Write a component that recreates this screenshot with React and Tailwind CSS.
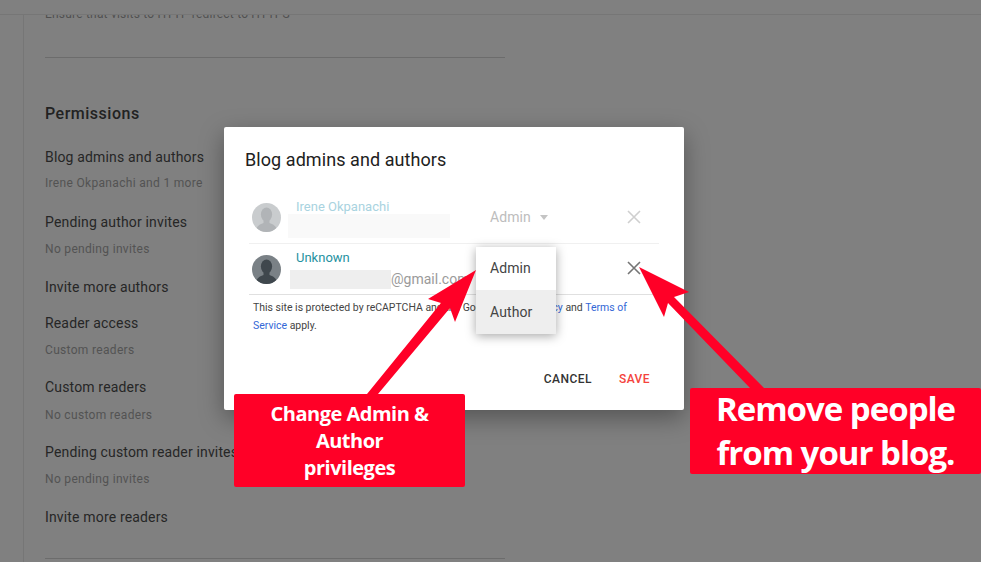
const settings = [
  { title: 'Blog admins and authors', sub: 'Irene Okpanachi and 1 more', titleGap: 'mt-[23px]', subGap: 'mt-[8px]' },
  { title: 'Pending author invites', sub: 'No pending invites', titleGap: 'mt-[21px]', subGap: 'mt-[9px]' },
  { title: 'Invite more authors', titleGap: 'mt-[20px]' },
  { title: 'Reader access', sub: 'Custom readers', titleGap: 'mt-[16px]', subGap: 'mt-[9px]' },
  { title: 'Custom readers', sub: 'No custom readers', titleGap: 'mt-[19px]', subGap: 'mt-[10px]' },
  { title: 'Pending custom reader invites', sub: 'No pending invites', titleGap: 'mt-[19px]', subGap: 'mt-[9px]' },
  { title: 'Invite more readers', titleGap: 'mt-[20px]' },
]

const Avatar = ({ faded }) => (
  <svg width="29" height="29" viewBox="0 0 29 29" className={faded ? 'shrink-0 opacity-40' : 'shrink-0'}>
    <defs>
      <clipPath id={faded ? 'avatar-a' : 'avatar-b'}>
        <circle cx="14.5" cy="14.5" r="14.5" />
      </clipPath>
    </defs>
    <g clipPath={faded ? 'url(#avatar-a)' : 'url(#avatar-b)'}>
      <rect width="29" height="29" fill="#7a8186" />
      <ellipse cx="14.5" cy="11.5" rx="5.6" ry="7" fill="#3f474d" />
      <path d="M11.5 17h6v3c3 1.4 7 2 8 9H3.5c1-7 5-7.6 8-9z" fill="#3f474d" />
    </g>
  </svg>
)

const CloseIcon = ({ color }) => (
  <svg width="14" height="14" viewBox="0 0 14 14">
    <path d="M1 1l12 12M13 1L1 13" stroke={color} strokeWidth="1.6" fill="none" />
  </svg>
)

export default function App() {
  return (
    <div className="relative h-[562px] w-[981px] overflow-hidden bg-[#808080] font-['Roboto',sans-serif]">
      <div className="relative z-10 h-[15px] border-b border-[#767676] bg-[#808080]" />

      {/* dimmed settings page */}
      <div className="ml-[23px] h-[556px] border-l border-[#767676] pl-[21px]">
        <div className="w-[460px]">
          <div className="-mt-[9px] text-[12px] leading-[16px] tracking-[0.2px] text-[#505050]">
            Ensure that visits to HTTP redirect to HTTPS
          </div>
          <div className="mt-[35px] border-t border-[#6c6c6c]" />
          <h2 className="mt-[46px] text-[16px] leading-[20px] font-medium tracking-[0.5px] text-[#222]">Permissions</h2>
          {settings.map((s) => (
            <div key={s.title + s.titleGap}>
              <div className={`${s.titleGap} text-[14px] leading-[20px] tracking-[0.16px] whitespace-nowrap text-[#262626]`}>{s.title}</div>
              {s.sub && <div className={`${s.subGap} text-[12px] leading-[16px] tracking-[0.32px] text-[#535353]`}>{s.sub}</div>}
            </div>
          ))}
          <div className="mt-[31px] border-t border-[#6c6c6c]" />
        </div>
      </div>

      {/* modal */}
      <div className="absolute top-[127px] left-[224px] z-20 h-[283px] w-[460px] rounded-[2px] bg-white px-[25px] shadow-[0_8px_24px_rgba(0,0,0,0.35)]">
        <h1 className="-ml-[4px] pt-[22px] text-[18px] leading-[22px] tracking-[0.07px] text-[#212121]">Blog admins and authors</h1>

        <div className="mt-[20px] flex h-[53px] items-center border-b border-[#f0f0f0] pr-[18px] pl-[3px]">
          <Avatar faded />
          <div className="ml-[7px] w-[202px] shrink-0">
            <div className="mt-[3px] pl-[8px] text-[13px] leading-[16px] text-[#a9d3e0]">Irene Okpanachi</div>
            <div className="mt-[-1px] h-[24px] w-[162px] bg-[#f9f9f9]" />
          </div>
          <span className="text-[14px] tracking-[0.1px] text-[#bdbdbd]">Admin</span>
          <span className="mt-[1px] ml-[9px] h-0 w-0 border-x-[4.5px] border-t-[5px] border-x-transparent border-t-[#c4c4c4]" />
          <span className="ml-auto"><CloseIcon color="#cfcfcf" /></span>
        </div>

        <div className="flex h-[51px] items-center border-b border-[#e0e0e0] pr-[18px] pl-[3px]">
          <Avatar />
          <div className="ml-[9px] flex-1">
            <div className="mt-[1px] pl-[6px] text-[13px] leading-[16px] text-[#26919f]">Unknown</div>
            <div className="mt-[4px] flex items-center">
              <div className="h-[19px] w-[101px] bg-[#eeeeee]" />
              <span className="text-[14px] leading-[19px] text-[#9a9a9a]">@gmail.com</span>
            </div>
          </div>
          <span className="-mt-[3px]"><CloseIcon color="#757575" /></span>
        </div>

        <p className="mt-[4px] ml-[4px] text-[10.47px] leading-[18px] text-[#444]">
          This site is protected by reCAPTCHA and the Google <span className="text-[#3367d6]">Privacy Policy</span> and <span className="text-[#3367d6]">Terms of Service</span> apply.
        </p>

        <div className="mt-[36px] flex justify-end gap-[27px] pr-[9px] text-[12px] leading-[16px] font-medium tracking-[0.45px]">
          <span className="text-[#333]">CANCEL</span>
          <span className="text-[#f4433c]">SAVE</span>
        </div>

        {/* role menu */}
        <div className="absolute top-[120px] left-[252px] w-[80px] bg-white text-[14px] tracking-[0.1px] text-[#444] shadow-[0_2px_10px_rgba(0,0,0,0.35)]">
          <div className="flex h-[43px] items-center pl-[14px]">Admin</div>
          <div className="flex h-[44px] items-center bg-[#eeeeee] pl-[14px]">Author</div>
        </div>
      </div>

      {/* annotation arrows */}
      <svg className="absolute top-0 left-0 z-30" width="981" height="562" viewBox="0 0 981 562">
        <polygon fill="#ff0027" points="367,394 441,303 428,299 476,270 455,322 450,308 378,394" />
        <polygon fill="#ff0027" points="639,267 689,292 674,297 764,388 750,388 668,303 664,317" />
      </svg>

      {/* annotation callouts */}
      <div className="absolute top-[394px] left-[234px] z-40 flex h-[93px] w-[231px] items-center justify-center rounded-[2px] bg-[#ff0027] text-center font-['Open_Sans',sans-serif] text-[20px] leading-[27px] font-bold tracking-[-0.5px] text-white">
        <div>Change Admin &amp;<br />Author<br />privileges</div>
      </div>
      <div className="absolute top-[388px] left-[690px] z-40 flex h-[86px] w-[291px] items-center justify-center rounded-[2px] bg-[#ff0027] text-center font-['Open_Sans',sans-serif] text-[33px] leading-[44px] font-bold tracking-[-1px] text-white">
        <div>Remove people<br />from your blog.</div>
      </div>
    </div>
  )
}
